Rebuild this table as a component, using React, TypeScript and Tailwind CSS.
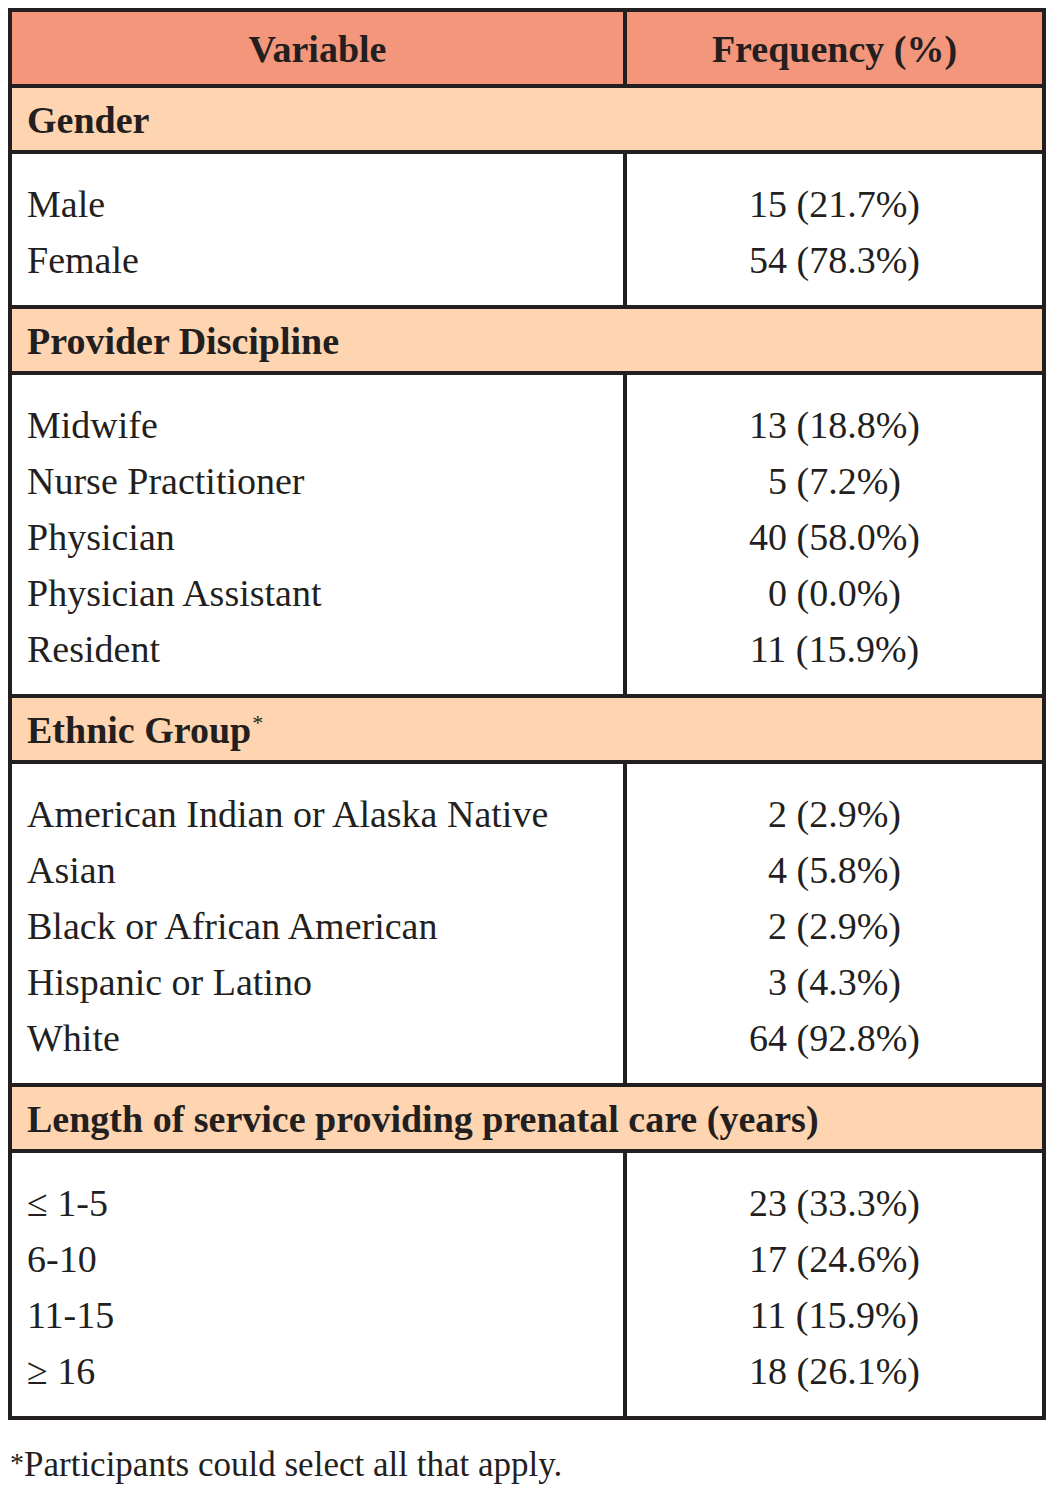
import React from "react";

type Section = {
  title: React.ReactNode;
  rows: [string, string][];
};

const sections: Section[] = [
  {
    title: "Gender",
    rows: [
      ["Male", "15 (21.7%)"],
      ["Female", "54 (78.3%)"],
    ],
  },
  {
    title: "Provider Discipline",
    rows: [
      ["Midwife", "13 (18.8%)"],
      ["Nurse Practitioner", "5 (7.2%)"],
      ["Physician", "40 (58.0%)"],
      ["Physician Assistant", "0 (0.0%)"],
      ["Resident", "11 (15.9%)"],
    ],
  },
  {
    title: (
      <>
        Ethnic Group
        <span className="text-[22px] font-normal align-top relative top-[4px] ml-[1px]">*</span>
      </>
    ),
    rows: [
      ["American Indian or Alaska Native", "2 (2.9%)"],
      ["Asian", "4 (5.8%)"],
      ["Black or African American", "2 (2.9%)"],
      ["Hispanic or Latino", "3 (4.3%)"],
      ["White", "64 (92.8%)"],
    ],
  },
  {
    title: "Length of service providing prenatal care (years)",
    rows: [
      ["≤ 1-5", "23 (33.3%)"],
      ["6-10", "17 (24.6%)"],
      ["11-15", "11 (15.9%)"],
      ["≥ 16", "18 (26.1%)"],
    ],
  },
];

export default function App() {
  return (
    <div
      className="w-[1054px] h-[1492px] bg-white text-[#231f20]"
      style={{ fontFamily: '"Liberation Serif", "Times New Roman", serif' }}
    >
      <div className="pt-[8px] pl-[8px]">
        <div className="w-[1038px] border-4 border-[#231f20]">
          {/* Header */}
          <div className="flex h-[76px] bg-[#f4967c] border-b-4 border-[#231f20]">
            <div className="w-[615px] border-r-4 border-[#231f20] flex items-center justify-center pt-[3px] text-[38px] font-bold">
              Variable
            </div>
            <div className="flex-1 flex items-center justify-center pt-[3px] text-[38px] font-bold">
              Frequency (%)
            </div>
          </div>
          {sections.map((s, i) => (
            <div key={i}>
              <div className="h-[66px] bg-[#fed5b0] border-b-4 border-[#231f20] flex items-center pl-[15px] pt-[2px] text-[38px] font-bold">
                <span>{s.title}</span>
              </div>
              <div
                className={
                  "flex " + (i < sections.length - 1 ? "border-b-4 border-[#231f20]" : "")
                }
              >
                <div className="w-[615px] border-r-4 border-[#231f20] pt-[22px] pb-[17px] pl-[15px] text-[38px] leading-[56px]">
                  {s.rows.map((r, j) => (
                    <div key={j}>{r[0]}</div>
                  ))}
                </div>
                <div className="flex-1 pt-[22px] pb-[17px] text-[38px] leading-[56px] text-center">
                  {s.rows.map((r, j) => (
                    <div key={j}>{r[1]}</div>
                  ))}
                </div>
              </div>
            </div>
          ))}
        </div>
        <div className="mt-[25px] pl-[2px] text-[35px] leading-[40px]">
          <span className="text-[28px] align-top relative -top-[2px]">*</span>Participants could select all that apply.
        </div>
      </div>
    </div>
  );
}
